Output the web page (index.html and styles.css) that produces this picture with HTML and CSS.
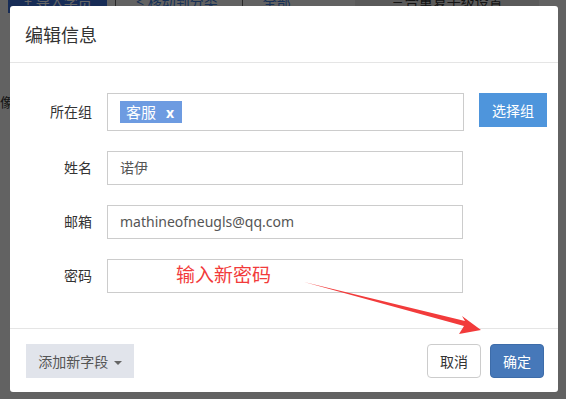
FILE: index.html
```html
<!DOCTYPE html>
<html lang="zh">
<head>
<meta charset="utf-8">
<link rel="stylesheet" href="styles.css">
</head>
<body>
<div class="page">
  <div class="toolbar">
    <span class="tb tb-primary">+ 导入学员</span>
    <span class="tb tb-line">&lt; 移动到分类</span>
    <span class="tb tb-line">全部</span>
    <span class="tb tb-grey">三合重复子级设置</span>
    <span class="tb tb-danger">▢ 删除学员</span>
  </div>
  <div class="side">像</div>
</div>
<div class="backdrop"></div>
<div class="overlay">
  <div class="modal">
    <div class="modal-header">编辑信息</div>
    <div class="modal-body">
      <div class="row">
        <label class="label">所在组</label>
        <div class="input input-tall"><span class="tag">客服 <b>x</b></span></div>
        <button class="btn btn-select">选择组</button>
      </div>
      <div class="row">
        <label class="label">姓名</label>
        <div class="input">诺伊</div>
      </div>
      <div class="row">
        <label class="label">邮箱</label>
        <div class="input">mathineofneugls@qq.com</div>
      </div>
      <div class="row">
        <label class="label">密码</label>
        <div class="input input-note"><span class="note">输入新密码</span></div>
      </div>
    </div>
    <div class="modal-footer">
      <button class="btn btn-add">添加新字段 <span class="caret"></span></button>
      <div class="actions">
        <button class="btn btn-cancel">取消</button>
        <button class="btn btn-ok">确定</button>
      </div>
    </div>
  </div>
  <svg class="arrow" width="566" height="399" viewBox="0 0 566 399">
    <polygon points="304,282 465,321 462,316 481,330 459,334 464,326" fill="#f23b3b"/>
  </svg>
</div>
</body>
</html>
```

FILE: styles.css
```css
* { box-sizing: border-box; }
html, body { margin: 0; padding: 0; }
body {
  width: 566px;
  height: 399px;
  overflow: hidden;
  position: relative;
  background: #f4f4f4;
  font-family: "Noto Sans", "Noto Sans CJK SC", sans-serif;
  font-size: 14px;
  color: #333;
}
.page { padding: 0 0 0 0; }
.toolbar {
  display: flex;
  align-items: center;
  gap: 8px;
  height: 16px;
  margin-top: -6px;
  padding-left: 8px;
  font-size: 14px;
}
.tb { height: 22px; line-height: 22px; padding: 0 16px; white-space: nowrap; }
.tb-primary { background: #3b6fd6; color: #fff; width: 99px; }
.tb-line { border-left: 1px solid #666; color: #3a78d8; padding-left: 20px; }
.tb-grey { background: #e0e0e0; color: #333; padding: 0 36px; margin-left: 40px; }
.tb-danger { border-left: 1px solid #d44; color: #d33; margin-left: 20px; }
.side { padding: 82px 0 0 0; color: #333; font-size: 13px; }
.backdrop {
  position: absolute;
  inset: 0;
  background: rgba(0, 0, 0, 0.6);
}
.overlay {
  position: absolute;
  inset: 0;
  padding: 6px 8px 7px 10px;
}
.modal {
  width: 548px;
  height: 386px;
  background: #fff;
  border-radius: 3px;
  display: flex;
  flex-direction: column;
}
.modal-header {
  height: 57px;
  border-bottom: 1px solid #e5e5e5;
  padding: 15px 15px 0 15px;
  font-size: 18px;
  line-height: 28px;
  color: #333;
}
.modal-body {
  flex: 1;
  padding: 30px 11px 0 15px;
  display: flex;
  flex-direction: column;
  gap: 20px;
  border-bottom: 1px solid #e5e5e5;
}
.row {
  display: grid;
  grid-template-columns: 67px 357px 68px;
  column-gap: 15px;
  align-items: start;
}
.label {
  text-align: right;
  line-height: 34px;
  color: #333;
}
.row:first-child .label { line-height: 38px; }
.input {
  height: 34px;
  border: 1px solid #ccc;
  padding: 0 12px;
  line-height: 32px;
  color: #555;
  width: 356px;
}
.input-tall {
  height: 38px;
  width: 357px;
  padding: 7px 12px 0 12px;
  line-height: 22px;
}
.input-note { position: relative; }
.note {
  position: absolute;
  left: 68px;
  top: 1px;
  font-size: 19px;
  line-height: 28px;
  color: #f23b3b;
}
.tag {
  display: inline-block;
  height: 22px;
  line-height: 22px;
  padding: 0 8px 0 6px;
  background: #6d9be1;
  color: #fff;
  font-size: 15px;
}
.tag b { margin-left: 6px; font-size: 14px; }
.btn {
  border: none;
  font-family: inherit;
  font-size: 14px;
  height: 34px;
  padding: 0;
  cursor: pointer;
}
.btn-select {
  background: #4e95dc;
  color: #fff;
  width: 68px;
}
.modal-footer {
  height: 63px;
  padding: 15px 14px 14px 16px;
  display: flex;
  justify-content: space-between;
}
.btn-add {
  width: 108px;
  background: #e1e4eb;
  color: #555;
}
.caret {
  display: inline-block;
  width: 0;
  height: 0;
  border-left: 4px solid transparent;
  border-right: 4px solid transparent;
  border-top: 4px solid #666;
  vertical-align: middle;
  margin-left: 2px;
}
.actions { display: flex; gap: 9px; }
.btn-cancel {
  width: 54px;
  background: #fff;
  border: 1px solid #ccc;
  border-radius: 4px;
  color: #333;
}
.btn-ok {
  width: 54px;
  background: #4678b9;
  border: 1px solid #3d6ca9;
  border-radius: 4px;
  color: #fff;
}
.arrow { position: absolute; left: 0; top: 0; pointer-events: none; }
```
